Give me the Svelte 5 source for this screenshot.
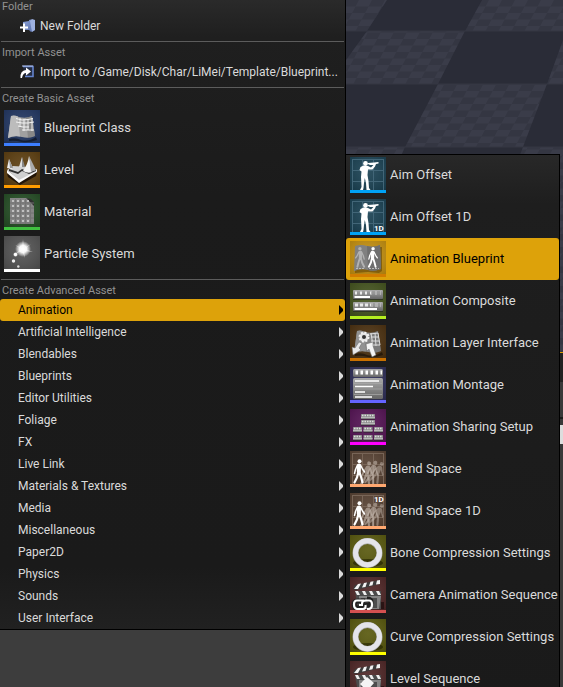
<script>
  const importPath = '/Game/Disk/Char/LiMei/Template/Blueprint...';

  const basicAssets = [
    { label: 'Blueprint Class', icon: 'blueprint', bg: '#1e335f', bar: '#3d7eff' },
    { label: 'Level', icon: 'level', bg: '#5a3b0c', bar: '#ff9c00' },
    { label: 'Material', icon: 'material', bg: '#214a21', bar: '#40c040' },
    { label: 'Particle System', icon: 'particle', bg: '#505050', bar: '#ffffff' }
  ];

  const categories = [
    'Animation', 'Artificial Intelligence', 'Blendables', 'Blueprints',
    'Editor Utilities', 'Foliage', 'FX', 'Live Link', 'Materials & Textures',
    'Media', 'Miscellaneous', 'Paper2D', 'Physics', 'Sounds', 'User Interface'
  ];

  const animationAssets = [
    { label: 'Aim Offset', icon: 'aim', bg: '#163e50', bar: '#00a2f5' },
    { label: 'Aim Offset 1D', icon: 'aim1d', bg: '#163e50', bar: '#00a2f5' },
    { label: 'Animation Blueprint', icon: 'animbp', bg: '#c38e0c', bar: '#d17c00' },
    { label: 'Animation Composite', icon: 'composite', bg: '#40501a', bar: '#b5ee20' },
    { label: 'Animation Layer Interface', icon: 'layer', bg: '#482d0c', bar: '#c87000' },
    { label: 'Animation Montage', icon: 'montage', bg: '#2b2b55', bar: '#6464ff' },
    { label: 'Animation Sharing Setup', icon: 'sharing', bg: '#521052', bar: '#ff00ff' },
    { label: 'Blend Space', icon: 'blend', bg: '#533d2e', bar: '#ffa870' },
    { label: 'Blend Space 1D', icon: 'blend1d', bg: '#533d2e', bar: '#ffa870' },
    { label: 'Bone Compression Settings', icon: 'ring', bg: '#56560a', bar: '#ffff00' },
    { label: 'Camera Animation Sequence', icon: 'camera', bg: '#4c2323', bar: '#d45050' },
    { label: 'Curve Compression Settings', icon: 'ring', bg: '#56560a', bar: '#ffff00' },
    { label: 'Level Sequence', icon: 'sequence', bg: '#4c2323', bar: '#d45050' }
  ];

  let category = $state('Animation');
  let asset = $state('Animation Blueprint');
</script>

{#snippet grid(color)}
  <path d="M2 2.5H34M2 13.5H34M2 24.5H34M2.5 2V33M12.5 2V33M23.5 2V33M33.5 2V33" stroke={color} fill="none" />
{/snippet}

{#snippet aimer()}
  {@render grid('#426678')}
  <g fill="#fff">
    <circle cx="15.5" cy="6.5" r="2.4" />
    <path d="M10.500 10L13.5 8.5L18 9L21 10.500L23.500 8H20L18 7V6L24 5.5L28.5 5V6.5L26 7L25 9.500L22.5 12.500L18 12.500L17.500 18L18.500 24L19 31L20.5 33H16.5L16 26L14.800 21L14 26L13.5 31L13 33H10L11.5 30L11 20L11.5 14.500L9.5 13Z" />
  </g>
{/snippet}

{#snippet walker(color)}
  <circle cx="9.500" cy="10.200" r="2" fill={color} />
  <g fill="none" stroke={color} stroke-linejoin="round" stroke-linecap="round">
    <path d="M9 14.500L8.800 20.500" stroke-width="4" />
    <path d="M8.200 21.500L7 26.500L4.500 31.500M9.600 21.500L11.200 26.500L12.500 31.500" stroke-width="2.200" />
    <path d="M7.500 14L5.500 18.500L4.500 22.500M10.500 14L12.500 18L14.500 21" stroke-width="1.500" />
  </g>
{/snippet}

{#snippet blender()}
  {@render grid('#786557')}
  <g opacity=".45"><g transform="translate(19 -1) rotate(22 9 22) translate(0 4) scale(1 .9)">{@render walker('#c8bcb2')}</g></g>
  <g opacity=".55"><g transform="translate(13 1) rotate(14 9 22)">{@render walker('#c8bcb2')}</g></g>
  <g opacity=".6"><g transform="translate(8 2) rotate(8 9 22)">{@render walker('#c8bcb2')}</g></g>
  {@render walker('#fff')}
{/snippet}

{#snippet clapper()}
  <path d="M25 25H34V32H20Z" fill="#1d0d0d" opacity=".7" />
  <path d="M3 12L5 8L30 3V7L6 13Z" fill="#3c3c3c" />
  <path d="M4 12L8 7L11 6.5L8 12ZM12 10.5L14 6L17 5.4L15.5 10ZM19 9L20.5 4.8L23.5 4.2L22.5 8.3ZM26 7.5L27 3.5L30 3V7Z" fill="#f2f2f2" />
  <path d="M5 14H31V32H8Z" fill="#4b4b4b" />
  <path d="M5 14H8L10 18H7ZM12 14H15L17 18H14ZM19 14H22L24 18H21ZM26 14H29L31 18H28Z" fill="#eee" />
  <path d="M9 19H31L29 32H9Z" fill="#858585" />
  <path d="M11 21H27V31H11Z" fill="#4d4d4d" />
{/snippet}

{#snippet sheet(dark)}
  <path d="M5 29Q12 27 17 30Q25 32 32 27L33 30Q25 33 18 32Q10 30 5 31Z" fill="#000" opacity=".45" />
  <path d="M7 6Q11 5 15 7Q22 9 28 6L31 26Q25 29 18 27Q11 25 4 28Z" fill={dark ? '#858585' : '#a0a0a0'} />
  <path d="M14 6.500L16 26.500Q10 25 4 28L7 6Q10 5 14 6.500Z" fill={dark ? '#929292' : '#bcbcbc'} />
  <path d="M22 8L24 28L31 26L28 6Z" fill="#6f6f6f" opacity=".5" />
{/snippet}

{#snippet assetIcon(item)}
  <svg class="thumb" viewBox="0 0 36 36" aria-hidden="true">
    <defs>
      <radialGradient id="shade" cx=".5" cy=".4" r=".75">
        <stop offset="0" stop-color="#fff" stop-opacity=".1" />
        <stop offset="1" stop-color="#000" stop-opacity=".15" />
      </radialGradient>
      <radialGradient id="glow">
        <stop offset="0" stop-color="#fff" />
        <stop offset=".45" stop-color="#fff" stop-opacity=".95" />
        <stop offset="1" stop-color="#fff" stop-opacity="0" />
      </radialGradient>
      <linearGradient id="metal" x1="0" y1="0" x2="0" y2="1">
        <stop offset="0" stop-color="#aaa" />
        <stop offset="1" stop-color="#666" />
      </linearGradient>
    </defs>
    <rect width="36" height="36" fill={item.bg} />
    <rect width="36" height="36" fill="url(#shade)" />

    {#if item.icon === 'blueprint'}
      {@render sheet(false)}
      <path d="M12 8.5L18 10L24 9.5L29 8.5M12 12L18 13L24 13L30 12M14 16L19 17L25 17M18 20H30M16 8V17M20 9V21M24 9V20M28 8V21" fill="none" stroke="#f2f2f2" />
    {:else if item.icon === 'level'}
      <path d="M3 21L15 30L33 20L32 24L16 33L4 25Z" fill="#221507" />
      <path d="M3 18L15 27L33 17V20L15 31L3 21Z" fill="#fafafa" />
      <path d="M3 18L9 14L25 15L33 19L15 28Z" fill="#d0d0d0" />
      <path d="M5 17L14 20L18 17L25 20L32 18V19L25 22L18 19L14 22L5 19Z" fill="#303030" />
      <path d="M3 16L5 7L8 14V17Z" fill="#ededed" /><path d="M5 7L9 16L6 16Z" fill="#999" />
      <path d="M15 15L18 5L20 15Z" fill="#ddd" /><path d="M18 5L21 15H18Z" fill="#888" />
      <path d="M19 19Q24 12 25 4L28 20Q24 22 19 19Z" fill="#f4f4f4" /><path d="M25 4L32 18L27 20Z" fill="#aaa" />
    {:else if item.icon === 'material'}
      <path d="M6 4H23L30 10V30H6Z" fill="#858585" />
      <path d="M22 4L30 12V8L27 5Z" fill="#303030" />
      {#each [7, 12, 17, 22, 27] as y}
        <path d="M8 {y}H28" stroke="#c0c0c0" stroke-width="2" stroke-dasharray="2 3" />
        <path d="M6 {y + 2}H30" stroke="#707070" />
      {/each}
      <path d="M11.5 5V30M16.5 5V30M21.5 5V30M26.5 9V30" stroke="#747474" />
    {:else if item.icon === 'particle'}
      <circle cx="19" cy="13" r="8" fill="url(#glow)" />
      <path d="M19 3L20 12L27 8L21 13L29 16L20 15L21 22L18 15L11 18L17 13L11 9L18 12Z" fill="#fff" opacity=".5" />
      <circle cx="11.5" cy="18.5" r="2.5" fill="url(#glow)" />
      <circle cx="11.5" cy="18.5" r="1.4" fill="#fff" />
      <circle cx="9.5" cy="25" r="1.7" fill="#eee" />
      <circle cx="14.3" cy="30.5" r="1.2" fill="#ddd" />
    {:else if item.icon === 'aim' || item.icon === 'aim1d'}
      {@render aimer()}
      {#if item.icon === 'aim1d'}
        <text x="24" y="32" class="tag">1D</text>
      {/if}
    {:else if item.icon === 'animbp'}
      <path d="M5 6H32V30L29 32L18 31L5 32Z" fill="#5f4408" opacity=".6" />
      <path d="M5 5Q11 3 17 5Q24 7 30 4L31 28Q24 31 18 29Q11 27 4 30Z" fill="#808080" />
      <path d="M17 5Q24 7 30 4L31 28Q24 31 18 29Z" fill="#6e6e6e" />
      <g transform="translate(18 -1) scale(-.85 .85)">{@render walker('#b2b2b2')}</g>
      <g transform="translate(15 -1) scale(.85)">{@render walker('#fff')}</g>
      <path d="M6 27.500H15M19 27.500H29" stroke="#bbb" stroke-dasharray="2 1" />
    {:else if item.icon === 'composite'}
      {#each [7, 19] as y}
        <rect x="3" {y} width="30" height="9" rx="1" fill="url(#metal)" />
        <path d="M5 {y + 3}H31" stroke="#fff" stroke-width="3" stroke-dasharray={y === 7 ? '2 3' : '3 2'} opacity=".8" />
        <path d="M21 {y + 3}H31" stroke="#999" stroke-width="3" opacity=".7" />
        <path d="M4.5 {y + 7}H{y === 7 ? 20 : 27}" stroke="#fff" stroke-width="2" />
        <rect x="3" y={y + 9} width="30" height="1" fill="#222" opacity=".6" />
      {/each}
    {:else if item.icon === 'layer'}
      {@render sheet(true)}
      <path d="M20 9L28 8M21 12H29M21 16H29M22 20H30M21 8L23 21M25 8L26 21M28 8L30 20" stroke="#ddd" fill="none" />
      <circle cx="14" cy="12" r="4.500" fill="#e4e4e4" stroke="#f2f2f2" stroke-width="2" stroke-dasharray="2 1.500" />
      <circle cx="14" cy="12" r="2" fill="#333" />
      <path d="M12 18L9 23L11 25L3 30L2 22L5 23L9 17Z" fill="#e8e8e8" stroke="#666" stroke-width=".5" />
      <path d="M16 19L23 17L23 21L26 30L22 32L19 24L17 26Z" fill="#f4f4f4" stroke="#666" stroke-width=".5" />
    {:else if item.icon === 'montage'}
      <rect x="3" y="2" width="30" height="8" rx="1.5" fill="url(#metal)" />
      <path d="M5.5 5.5H32" stroke="#fff" stroke-width="4" stroke-dasharray="2.5 2.5" />
      <rect x="3" y="11" width="30" height="21" rx="1.5" fill="url(#metal)" />
      <path d="M5 14H29M5 19.5H23M5 25H15M5 30H22" stroke="#fff" stroke-width="1.5" />
      <path d="M4 16.5H32M4 22H32M4 27.5H32" stroke="#aaa" stroke-width=".7" />
    {:else if item.icon === 'sharing'}
      {#each [[11, 5, 14], [11, 11, 14], [3, 18, 9], [13.5, 18, 9], [24, 18, 9], [3, 26, 9], [13.5, 26, 9], [24, 26, 9]] as [x, y, w]}
        <rect {x} {y} width={w} height="5" rx=".5" fill="#8e8e8e" />
        <path d="M{x + 1} {y + 1.5}h{w - 2}" stroke="#ddd" stroke-width="1.5" stroke-dasharray="1.5 1" />
        <path d="M{x} {y + 3.5}h{w}" stroke="#b8b8b8" />
        <path d="M{x} {y + 5.3}h{w}" stroke="#222" opacity=".5" />
      {/each}
    {:else if item.icon === 'blend' || item.icon === 'blend1d'}
      {@render blender()}
      {#if item.icon === 'blend1d'}
        <text x="24" y="9" class="tag">1D</text>
      {/if}
    {:else if item.icon === 'ring'}
      <ellipse cx="18" cy="28" rx="15" ry="4" fill="#272703" opacity=".7" />
      <circle cx="17.5" cy="18" r="12" fill="none" stroke="#aaa" stroke-width="6" />
      <circle cx="17.5" cy="17.7" r="12" fill="none" stroke="#e4e4ea" stroke-width="5" />
    {:else if item.icon === 'camera'}
      {@render clapper()}
      <g fill="none" stroke="#222" stroke-width="5"><path d="M15 24H8Q4 24 4 27.5T8 31H13M10 28H17Q21 28 21 25T17 22" /></g>
      <g fill="none" stroke="#fff" stroke-width="2.2"><path d="M14 23.5H7Q4 23.5 4 27.5T7 32H13Q16 32 15.5 28M9 28H13M12 27Q12 23.5 16 23.5H19Q22 23.5 22 27.5T19 32H17" /></g>
    {:else}
      {@render clapper()}
      <path d="M17 16L24 22L17 30L10 23Z" fill="#f5f5f5" />
    {/if}

    <rect y="33" width="36" height="3" fill={item.bar} />
  </svg>
{/snippet}

<main class="editor">
  <nav class="menu" aria-label="Create asset">
    <section>
      <h2>Folder</h2>
      <button class="command">
        <svg viewBox="0 0 16 16" aria-hidden="true">
          <defs><linearGradient id="folder" x2="1" y2="1"><stop stop-color="#8ea3d8" /><stop offset="1" stop-color="#536aa5" /></linearGradient></defs>
          <path d="M3 4L9 3V2L11 1.5L15 3V12L11 14L9 12H3Z" fill="url(#folder)" />
          <path d="M10 3L12 1L15 2V12L12 14Z" fill="#9db0df" />
          <path d="M0 9.5H8M4 5.5V14" stroke="#fff" stroke-width="2" />
        </svg>
        <span>New Folder</span>
      </button>
    </section>
    <section>
      <h2>Import Asset</h2>
      <button class="command">
        <svg viewBox="0 0 16 16" aria-hidden="true">
          <path d="M3 2.5H13V12.5H5" fill="#252d42" stroke="#6383cc" stroke-width="1.6" />
          <path d="M2 2H13" stroke="#b4c3ec" />
          <path d="M.5 14Q0 6.5 6 6V3.5L11 7.5L6 11.5V9Q3 9 2 14Z" fill="#fff" />
        </svg>
        <span>Import to {importPath}</span>
      </button>
    </section>
    <section>
      <h2>Create Basic Asset</h2>
      {#each basicAssets as item}
        <button class="asset">{@render assetIcon(item)}<span>{item.label}</span></button>
      {/each}
    </section>
    <section>
      <h2>Create Advanced Asset</h2>
      {#each categories as name}
        <button class="category" class:active={name === category} aria-haspopup="menu" onclick={() => (category = name)}>
          {name}
          <svg viewBox="0 0 4 10" aria-hidden="true"><path d="M0 0L4 4V6L0 10Z" fill="currentColor" /></svg>
        </button>
      {/each}
    </section>
  </nav>

  <div class="side">
    <svg class="floor" viewBox="0 0 217 352" preserveAspectRatio="none" aria-hidden="true">
      <defs>
        <pattern id="checks" width="26" height="13" patternUnits="userSpaceOnUse" patternTransform="skewX(-28)">
          <path d="M0 0H13V6.5H0ZM13 6.5H26V13H13Z" fill="#343642" />
        </pattern>
      </defs>
      <rect width="217" height="352" fill="#3a3c49" />
      <rect width="217" height="352" fill="url(#checks)" />
      <path d="M41 0H136L119 31H21ZM0 31H21L0 60ZM119 31H217V40L201 84H92ZM0 84H92L59 147H0ZM201 84H217V147H177ZM59 147H177L160 190H40Z" fill="#2a2c37" />
      <path d="M0 31H217M0 84H217M0 147H217" stroke="#343643" />
    </svg>
    <div class="panels" aria-hidden="true"><i></i></div>
    <nav class="submenu" aria-label="Animation">
      {#each animationAssets as item}
        <button class="asset" class:active={item.label === asset} onclick={() => (asset = item.label)}>
          {@render assetIcon(item)}<span>{item.label}</span>
        </button>
      {/each}
    </nav>
  </div>
</main>

<style>
  :global(body) {
    background: #3d3d3d;
    overflow: hidden;
  }

  .editor {
    display: grid;
    grid-template-columns: minmax(0, 1fr) 218px;
    align-items: start;
    height: 100vh;
    overflow: hidden;
    font-family: Roboto, "Liberation Sans", sans-serif;
    font-size: 13px;
    color: #dadada;
  }

  .menu {
    margin-top: -3px;
    background: linear-gradient(#2b2b2b, #1f1f1f 40px, #1b1b1b 200px, #1a1a1a 570px, #212121);
    border-bottom: 1px solid #000;
  }

  section + section::before {
    content: "";
    display: block;
    height: 1px;
    margin: 4px 1px 1px;
    background: #5c5c5c;
  }

  h2 {
    margin: 0;
    padding: 2px 0 0 2px;
    font-size: 11px;
    font-weight: 400;
    line-height: 16px;
    color: #929292;
  }

  button {
    display: flex;
    align-items: center;
    width: 100%;
    margin: 0;
    border: 0;
    border-radius: 3px;
    background: none;
    color: inherit;
    font: inherit;
    text-align: left;
    white-space: nowrap;
  }

  button span {
    padding-bottom: 2px;
  }

  .command {
    height: 22px;
    gap: 4px;
    padding: 0 4px 0 20px;
    font-size: 12px;
  }

  .command svg {
    flex: none;
    width: 16px;
    height: 16px;
  }

  .command span {
    padding-bottom: 0;
  }

  .asset {
    height: 42px;
    gap: 4px;
    padding: 0 4px;
  }

  .thumb {
    flex: none;
    width: 36px;
    height: 36px;
  }

  .tag {
    font: 700 8px Roboto, sans-serif;
    fill: #fff;
  }

  .category {
    height: 22px;
    justify-content: space-between;
    padding: 0 2px 0 18px;
    font-size: 12px;
  }

  .category svg {
    width: 4px;
    height: 10px;
  }

  .active {
    background: #dda20a;
    color: #000;
  }

  .side {
    position: relative;
    display: flex;
    flex-direction: column;
    height: 100vh;
    border-left: 1px solid #000;
  }

  .floor {
    position: absolute;
    top: 0;
    left: 0;
    width: 100%;
    height: 352px;
  }

  .panels {
    position: absolute;
    top: 352px;
    right: 0;
    bottom: 0;
    width: 3px;
    background: linear-gradient(#d99a00 1px, #222 1px 30px, #393939 30px 65px, #1c1c1c 65px 67px, #393939 67px);
  }

  .panels i {
    display: block;
    height: 19px;
    margin-top: 73px;
    background: #ddd;
  }

  .submenu {
    position: relative;
    margin: 154px 3px 0 0;
    border-right: 1px solid #000;
    background: linear-gradient(#000 1px, #282828 1px, #1e1e1e 50px, #1a1a1a);
  }
</style>
